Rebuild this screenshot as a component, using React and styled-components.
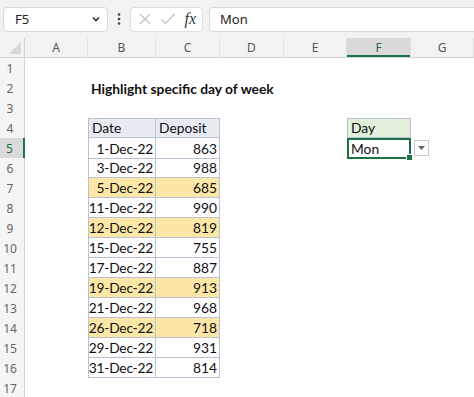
import React from 'react';
import styled, { createGlobalStyle } from 'styled-components';

const GlobalStyle = createGlobalStyle`
  html, body { margin: 0; padding: 0; background: #fff; }
  body { width: 474px; height: 397px; overflow: hidden; }
`;

// layout
const COLS = '25px 63px 68px 64px 64px 63px 64px 63px';
const UI_FONT = `"Noto Sans", "Open Sans", sans-serif`;
const CELL_FONT = `Lato, "Open Sans", sans-serif`;
const GREEN = '#1e7145';
const TBORDER = '#b7c1cf';

const Sheet = styled.div`
  width: 474px;
  height: 397px;
  overflow: hidden;
  display: flex;
  flex-direction: column;
`;

const FormulaBar = styled.div`
  height: 38px;
  flex: none;
  background: #f2f2f2;
  display: flex;
  align-items: center;
  padding: 0 0 0 3px;
  box-sizing: border-box;
`;

const NameBox = styled.div`
  width: 105px;
  height: 25px;
  box-sizing: border-box;
  background: #fff;
  border: 1px solid #d9d9d9;
  border-radius: 4px;
  display: flex;
  align-items: center;
  justify-content: space-between;
  padding: 0 6px 0 11px;
  font-family: ${UI_FONT};
  font-size: 13px;
  color: #222;
`;

const Dots = styled.div`
  width: 22px;
  display: flex;
  justify-content: center;
`;

const FxBox = styled.div`
  width: 73px;
  height: 25px;
  box-sizing: border-box;
  background: #fff;
  border: 1px solid #dedede;
  border-radius: 4px;
  display: flex;
  align-items: center;
  justify-content: space-between;
  padding: 0 6px 0 7px;
`;

const Fx = styled.span`
  font-family: "Liberation Serif", serif;
  font-style: italic;
  font-size: 16px;
  color: #333;
`;

const FormulaInput = styled.div`
  flex: 1;
  height: 25px;
  margin-left: 6px;
  box-sizing: border-box;
  background: #fff;
  border: 1px solid #d9d9d9;
  border-right: none;
  border-radius: 4px 0 0 4px;
  display: flex;
  align-items: center;
  padding-left: 10px;
  font-family: ${UI_FONT};
  font-size: 13px;
  color: #222;
`;

const HeaderRow = styled.div`
  display: grid;
  grid-template-columns: ${COLS};
  height: 19px;
  flex: none;
  background: #f2f2f2;
  border-bottom: 1px solid #d4d4d4;
`;

const ColHead = styled.div`
  position: relative;
  display: flex;
  align-items: center;
  justify-content: center;
  font-family: ${UI_FONT};
  font-size: 12px;
  color: ${p => (p.$active ? '#2d6b47' : '#555')};
  background: ${p => (p.$active ? '#dadada' : 'transparent')};
  border-right: 1px solid #e0e0e0;
  box-shadow: ${p => (p.$active ? `inset 0 -2px 0 ${GREEN}` : 'none')};
`;

const Corner = styled.div`
  position: relative;
  border-right: 1px solid #d4d4d4;
  &::after {
    content: '';
    position: absolute;
    right: 3px;
    bottom: 3px;
    border-left: 12px solid transparent;
    border-bottom: 12px solid #d8d8d8;
  }
`;

const Grid = styled.div`
  display: flex;
  flex-direction: column;
`;

const Row = styled.div`
  display: grid;
  grid-template-columns: ${COLS};
  height: 20px;
  flex: none;
`;

const RowHead = styled.div`
  display: flex;
  align-items: center;
  justify-content: center;
  padding-right: 4px;
  font-family: ${UI_FONT};
  font-size: 12px;
  color: ${p => (p.$active ? GREEN : '#666')};
  background: ${p => (p.$active ? '#dadada' : '#f5f5f5')};
  border-right: ${p => (p.$active ? `2px solid ${GREEN}` : '1px solid #d4d4d4')};
  box-sizing: border-box;
`;

const Cell = styled.div`
  position: relative;
  box-sizing: border-box;
  display: flex;
  align-items: flex-end;
  justify-content: ${p => (p.$right ? 'flex-end' : 'flex-start')};
  padding: 0 2px 1px 3px;
  font-family: ${CELL_FONT};
  font-size: 13.8px;
  font-weight: ${p => (p.$bold ? 700 : 400)};
  letter-spacing: ${p => (p.$tight ? '-0.25px' : 'normal')};
  color: #111;
  white-space: nowrap;
  background: ${p => p.$fill || 'transparent'};
  border-right: ${p => (p.$border ? `1px solid ${TBORDER}` : 'none')};
  border-bottom: ${p => (p.$border ? `1px solid ${TBORDER}` : 'none')};
  border-left: ${p => (p.$left ? `1px solid ${TBORDER}` : 'none')};
  border-top: ${p => (p.$top ? `1px solid ${TBORDER}` : 'none')};
`;

const Selected = styled(Cell)`
  border: 2px solid ${GREEN};
  padding: 0 2px 0;
  &::after {
    content: '';
    position: absolute;
    right: -4px;
    bottom: -4px;
    width: 5px;
    height: 5px;
    background: ${GREEN};
    border: 1px solid #fff;
  }
`;

const DropButton = styled.div`
  position: absolute;
  left: 65px;
  top: 0;
  width: 15px;
  height: 16px;
  box-sizing: border-box;
  background: #fff;
  border: 1px solid #c8c8c8;
  display: flex;
  align-items: center;
  justify-content: center;
  z-index: 2;
`;

const data = [
  ['1-Dec-22', 863],
  ['3-Dec-22', 988],
  ['5-Dec-22', 685, true],
  ['11-Dec-22', 990],
  ['12-Dec-22', 819, true],
  ['15-Dec-22', 755],
  ['17-Dec-22', 887],
  ['19-Dec-22', 913, true],
  ['21-Dec-22', 968],
  ['26-Dec-22', 718, true],
  ['29-Dec-22', 931],
  ['31-Dec-22', 814],
];

const HILITE = '#fde7a6';

function Empty({ n }) {
  return Array.from({ length: n }, (_, i) => <Cell key={'e' + i} />);
}

export default function App() {
  return (
    <Sheet>
      <GlobalStyle />
      <FormulaBar>
        <NameBox>
          F5
          <svg width="10" height="8" viewBox="0 0 10 8">
            <path d="M2 2.5 L5 5.5 L8 2.5" fill="none" stroke="#333" strokeWidth="1.6" />
          </svg>
        </NameBox>
        <Dots>
          <svg width="4" height="14" viewBox="0 0 4 14">
            <circle cx="2" cy="2.5" r="1.3" fill="#444" />
            <circle cx="2" cy="7" r="1.3" fill="#444" />
            <circle cx="2" cy="11.5" r="1.3" fill="#444" />
          </svg>
        </Dots>
        <FxBox>
          <svg width="14" height="14" viewBox="0 0 14 14">
            <path d="M2 2 L12 12 M12 2 L2 12" stroke="#c4c4c4" strokeWidth="1.3" />
          </svg>
          <svg width="16" height="14" viewBox="0 0 16 14">
            <path d="M1.5 7.5 L5.5 11.5 L14.5 2" fill="none" stroke="#c4c4c4" strokeWidth="1.3" />
          </svg>
          <Fx>fx</Fx>
        </FxBox>
        <FormulaInput>Mon</FormulaInput>
      </FormulaBar>

      <HeaderRow>
        <Corner />
        {['A', 'B', 'C', 'D', 'E', 'F', 'G'].map(c => (
          <ColHead key={c} $active={c === 'F'}>{c}</ColHead>
        ))}
      </HeaderRow>

      <Grid>
        <Row>
          <RowHead>1</RowHead>
          <Empty n={7} />
        </Row>
        <Row>
          <RowHead>2</RowHead>
          <Cell />
          <Cell $bold>Highlight specific day of week</Cell>
          <Empty n={5} />
        </Row>
        <Row>
          <RowHead>3</RowHead>
          <Empty n={7} />
        </Row>
        <Row>
          <RowHead>4</RowHead>
          <Cell />
          <Cell $border $left $top $fill="#e6ebf2">Date</Cell>
          <Cell $border $top $fill="#e6ebf2">Deposit</Cell>
          <Cell />
          <Cell />
          <Cell $border $left $top $fill="#e2efda">Day</Cell>
          <Cell />
        </Row>
        {data.map(([d, v, hi], i) => (
          <Row key={d}>
            <RowHead $active={i === 0}>{i + 5}</RowHead>
            <Cell />
            <Cell $border $left $right $tight $fill={hi ? HILITE : undefined}>{d}</Cell>
            <Cell $border $right $fill={hi ? HILITE : undefined}>{v}</Cell>
            <Cell />
            <Cell />
            {i === 0 ? (
              <Selected>
                Mon
                <DropButton>
                  <svg width="7" height="4" viewBox="0 0 7 4">
                    <path d="M0 0 L7 0 L3.5 4 Z" fill="#666" />
                  </svg>
                </DropButton>
              </Selected>
            ) : (
              <Cell />
            )}
            <Cell />
          </Row>
        ))}
        <Row>
          <RowHead>17</RowHead>
          <Empty n={7} />
        </Row>
      </Grid>
    </Sheet>
  );
}
